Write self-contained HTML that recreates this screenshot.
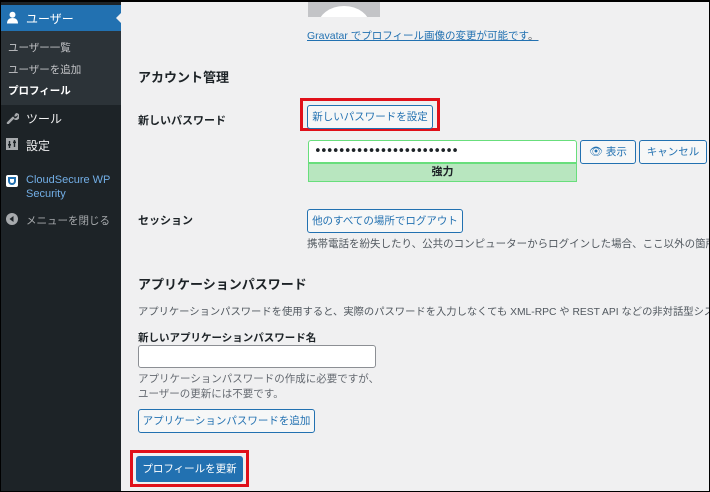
<!DOCTYPE html>
<html><head><meta charset="utf-8"><style>
*{margin:0;padding:0;box-sizing:border-box}
html,body{width:710px;height:492px;overflow:hidden}
body{background:#f0f0f1;font-family:"Liberation Sans","Noto Sans CJK JP",sans-serif;font-size:11px;color:#1d2327;position:relative}
.wrap{position:absolute;left:0;top:0;width:710px;height:492px;overflow:hidden}
.frame{position:absolute;inset:0;border:1px solid #000;border-top-width:2px;z-index:10;pointer-events:none}
.side{position:absolute;left:0;top:0;width:121px;height:492px;background:#1d2327;color:#f0f0f1}
.abs{position:absolute;white-space:nowrap}
.btn{position:absolute;border:1px solid #2271b1;border-radius:3px;background:#f6f7f7;color:#2271b1;font-size:10.5px;text-align:center;white-space:nowrap}
.red{position:absolute;border:3px solid #e0101a}
</style></head><body>
<div class="wrap">
<div class="side">
 <div style="position:absolute;top:5px;left:0;width:121px;height:26px;background:#2271b1"></div>
 <div style="position:absolute;top:12px;left:116px;width:0;height:0;border:6px solid transparent;border-right-color:#f0f0f1;border-left:0"></div>
 <svg class="abs" style="left:6px;top:11px" width="13" height="13" viewBox="0 0 13 13"><circle cx="6.5" cy="3.8" r="3" fill="#fff"/><path d="M1 12.5c0-4 2.5-5.5 5.5-5.5s5.5 1.5 5.5 5.5z" fill="#fff"/></svg>
 <div class="abs" style="left:26px;top:10px;font-size:12px;color:#fff">ユーザー</div>
 <div style="position:absolute;top:31px;left:0;width:121px;height:74px;background:#2c3338"></div>
 <div class="abs" style="left:8px;top:40px;font-size:10.5px;color:#c3c4c7">ユーザー一覧</div>
 <div class="abs" style="left:8px;top:62px;font-size:10.5px;color:#c3c4c7">ユーザーを追加</div>
 <div class="abs" style="left:8px;top:83px;font-size:10.5px;color:#fff;font-weight:bold">プロフィール</div>
 <svg class="abs" style="left:6px;top:111px" width="13" height="13" viewBox="0 0 13 13"><path d="M2 12L7 7" stroke="#a7aaad" stroke-width="2.5" stroke-linecap="round"/><path d="M7 7a3.5 3.5 0 1 0 3-5l-1.5 2 0 1.5 1.5 0 2-1.5A3.5 3.5 0 0 1 7 7z" fill="#a7aaad"/></svg>
 <div class="abs" style="left:26px;top:110px;font-size:12px;color:#f0f0f1">ツール</div>
 <svg class="abs" style="left:6px;top:138px" width="12" height="12" viewBox="0 0 12 12"><rect width="12" height="12" fill="#a7aaad"/><path d="M3.5 3v7M8.5 2v7" stroke="#1d2327" stroke-width="1.4"/><rect x="2" y="6" width="3" height="1.6" fill="#1d2327"/><rect x="7" y="3.5" width="3" height="1.6" fill="#1d2327"/></svg>
 <div class="abs" style="left:26px;top:137px;font-size:12px;color:#f0f0f1">設定</div>
 <div class="abs" style="left:6px;top:175px;width:12px;height:12px;background:#fff;border-radius:2px"><div style="position:absolute;left:2px;top:2px;width:8px;height:8px;border:2px solid #2271b1;border-radius:0 0 5px 5px"></div></div>
 <div class="abs" style="left:26px;top:173px;font-size:11px;color:#72aee6;line-height:14px">CloudSecure WP<br>Security</div>
 <svg class="abs" style="left:6px;top:213px" width="12" height="12" viewBox="0 0 12 12"><circle cx="6" cy="6" r="6" fill="#a7aaad"/><path d="M7.5 3v6L3.5 6z" fill="#1d2327"/></svg>
 <div class="abs" style="left:26px;top:213px;font-size:10.5px;color:#a7aaad">メニューを閉じる</div>
</div>
<div class="abs" style="left:308px;top:2px;width:72px;height:15px;background:#c3c4c7;overflow:hidden"><div style="position:absolute;left:10px;top:4px;width:52px;height:40px;border-radius:50%;background:#fff"></div></div>
<div class="abs" style="left:307px;top:28px;font-size:10.5px;color:#2271b1;text-decoration:underline">Gravatar でプロフィール画像の変更が可能です<span style="text-decoration:none;color:#50575e">。</span></div>
<div class="abs" style="left:138px;top:67px;font-size:13px;font-weight:bold">アカウント管理</div>
<div class="abs" style="left:138px;top:112px;font-size:11px;font-weight:bold">新しいパスワード</div>
<div class="red" style="left:300px;top:98px;width:140px;height:33px"></div>
<div class="btn" style="left:307px;top:105px;width:126px;height:24px;line-height:22px">新しいパスワードを設定</div>
<div class="abs" style="left:308px;top:140px;width:269px;height:23px;background:#fff;border:1px solid #68de7c;border-radius:3px 3px 0 0;font-size:13px;line-height:21px;padding-left:5px;letter-spacing:-1.7px;font-family:'DejaVu Sans',sans-serif">••••••••••••••••••••••••</div>
<div class="abs" style="left:308px;top:163px;width:269px;height:19px;background:#b8e6bf;border:1px solid #68de7c;text-align:center;font-weight:bold;font-size:11px;line-height:17px">強力</div>
<div class="btn" style="left:580px;top:140px;width:56px;height:24px;line-height:22px"><span style="font-size:11px">👁︎</span> 表示</div>
<div class="btn" style="left:639px;top:140px;width:68px;height:24px;line-height:22px">キャンセル</div>
<div class="abs" style="left:138px;top:212px;font-size:11px;font-weight:bold">セッション</div>
<div class="btn" style="left:307px;top:209px;width:156px;height:24px;line-height:22px">他のすべての場所でログアウト</div>
<div class="abs" style="left:307px;top:236px;font-size:10.5px;color:#50575e">携帯電話を紛失したり、公共のコンピューターからログインした場合、ここ以外の箇所</div>
<div class="abs" style="left:138px;top:274px;font-size:13px;font-weight:bold">アプリケーションパスワード</div>
<div class="abs" style="left:138px;top:303px;font-size:10.3px;color:#50575e">アプリケーションパスワードを使用すると、実際のパスワードを入力しなくても XML-RPC や REST API などの非対話型システムを</div>
<div class="abs" style="left:138px;top:330px;font-size:10.5px;font-weight:bold">新しいアプリケーションパスワード名</div>
<div class="abs" style="left:138px;top:345px;width:238px;height:23px;background:#fff;border:1px solid #8c8f94;border-radius:3px"></div>
<div class="abs" style="left:138px;top:372px;font-size:10.5px;color:#646970;line-height:15px">アプリケーションパスワードの作成に必要ですが、<br>ユーザーの更新には不要です。</div>
<div class="btn" style="left:138px;top:409px;width:177px;height:24px;line-height:22px">アプリケーションパスワードを追加</div>
<div class="red" style="left:130px;top:450px;width:119px;height:37px"></div>
<div class="btn" style="left:136px;top:456px;width:107px;height:26px;line-height:24px;background:#2271b1;color:#fff">プロフィールを更新</div>
</div>
<div class="frame"></div>
</body></html>
